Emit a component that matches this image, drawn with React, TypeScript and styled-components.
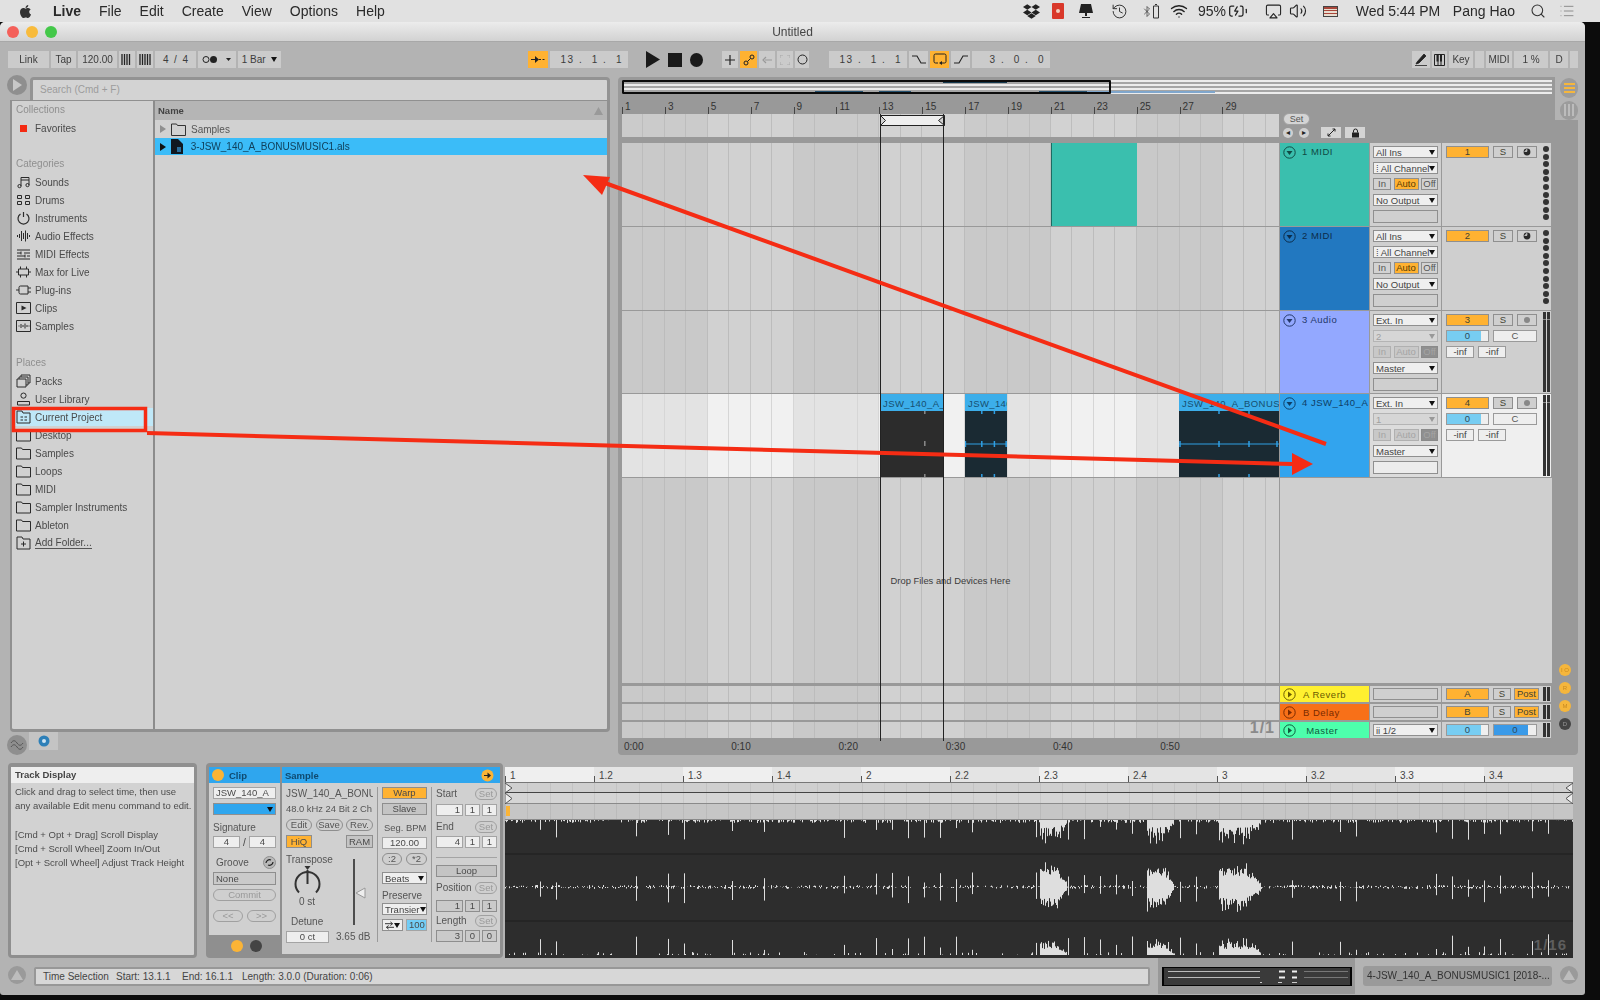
import styled, { createGlobalStyle } from "styled-components"
import { FaApple, FaDropbox } from "react-icons/fa"
import { Airplay, BatteryCharging, Bluetooth, History, List, Search, Volume2, Wifi } from "lucide-react"

const GlobalStyle = createGlobalStyle`
    html, body { margin: 0; padding: 0; background: #0c0c0c; }
    * { box-sizing: border-box; }
    body { font-family: "Liberation Sans", Arial, sans-serif; font-size: 10px; color: #3a3a3a; }
`

const BAR = 21.45

const Page = styled.div`
    position: relative;
    width: 1600px;
    height: 1000px;
    overflow: hidden;
    filter: blur(0.35px);
`

/* menu bar */
const MenuBar = styled.div`
    height: 22px;
    background: #e1e1e1;
    display: flex;
    align-items: center;
    padding-left: 18px;
    font-size: 14px;
    color: #2a2a2a;
`
const MenuItems = styled.div`
    display: flex;
    align-items: center;
    gap: 18px;
    margin-left: 20px;
`
const MenuItem = styled.span<{ $bold?: boolean }>`
    font-weight: ${p => (p.$bold ? 700 : 400)};
`
const Tray = styled.div`
    margin-left: auto;
    width: 580px;
    display: flex;
    align-items: center;
    justify-content: flex-start;
    padding-left: 2px;
`
const TraySlot = styled.div<{ $w: number; $ml?: number }>`
    width: ${p => p.$w}px;
    margin-left: ${p => p.$ml ?? 0}px;
    display: flex;
    align-items: center;
    justify-content: center;
    flex: none;
    white-space: nowrap;
`
const RedChip = styled.div`
    width: 12px;
    height: 16px;
    background: #d9382a;
    border-radius: 1px;
    display: flex;
    align-items: center;
    justify-content: center;
    &::after { content: ""; width: 4px; height: 4px; background: #f2d0c0; border-radius: 50%; }
`
const FlagChip = styled.div`
    width: 15px;
    height: 11px;
    background: repeating-linear-gradient(180deg, #a9463a 0 1.5px, #e8ddd0 1.5px 3px);
    border: 1px solid #444;
`

/* window */
const Window = styled.div`
    width: 1585px;
    height: 973px;
    background: #b3b3b3;
    border-radius: 5px 5px 3px 3px;
    display: flex;
    flex-direction: column;
`
const TitleBar = styled.div`
    height: 20px;
    flex: none;
    background: linear-gradient(180deg, #ececec, #d2d2d2);
    border-radius: 5px 5px 0 0;
    border-bottom: 1px solid #a8a8a8;
    display: grid;
    grid-template-columns: 1fr auto 1fr;
    align-items: center;
    font-size: 12px;
    color: #444;
`
const Lights = styled.div`
    display: flex;
    gap: 7px;
    padding-left: 7px;
`
const Light = styled.div<{ $c: string }>`
    width: 12px;
    height: 12px;
    border-radius: 50%;
    background: ${p => p.$c};
`

/* transport */
const ToolBar = styled.div`
    height: 35px;
    flex: none;
    display: flex;
    padding: 9px 7px 0 8px;
`
const ToolGroup = styled.div<{ $ml?: number; $gap?: number; $push?: boolean }>`
    display: flex;
    align-items: center;
    height: 17px;
    gap: ${p => p.$gap ?? 2}px;
    margin-left: ${p => (p.$push ? "auto" : `${p.$ml ?? 0}px`)};
`
const TBtn = styled.div<{ $w: number; $on?: boolean; $end?: boolean }>`
    width: ${p => p.$w}px;
    height: 17px;
    flex: none;
    background: ${p => (p.$on ? "#ffb232" : "#cbcbcb")};
    color: #3c3c3c;
    display: flex;
    align-items: center;
    justify-content: ${p => (p.$end ? "flex-end" : "center")};
    padding-right: ${p => (p.$end ? 5 : 0)}px;
    letter-spacing: ${p => (p.$end ? "1.5px" : "0")};
    white-space: pre;
    font-size: 10px;
`

/* main area */
const MainRow = styled.div`
    height: 678px;
    flex: none;
    display: flex;
    gap: 8px;
    padding-left: 10px;
`
const LeftCol = styled.div`
    width: 600px;
    display: flex;
    flex-direction: column;
`
const SearchRow = styled.div`
    height: 23px;
    flex: none;
    display: flex;
    justify-content: flex-end;
    position: relative;
`
const RoundBtn = styled.div<{ $top: number }>`
    position: absolute;
    left: -3px;
    top: ${p => p.$top}px;
    width: 20px;
    height: 20px;
    border-radius: 50%;
    background: #8f8f8f;
    display: flex;
    align-items: center;
    justify-content: center;
`
const SearchField = styled.div`
    width: 580px;
    background: #d3d3d3;
    border: 3px solid #939393;
    border-bottom: none;
    border-radius: 4px 4px 0 0;
    color: #9c9c9c;
    padding: 4px 7px;
    font-size: 10px;
`
const Browser = styled.div`
    height: 632px;
    flex: none;
    display: flex;
    background: #d1d1d1;
    border: 3px solid #909090;
    border-left-width: 2px;
    border-top-width: 1px;
    border-radius: 0 0 4px 4px;
`
const Sidebar = styled.div`
    width: 141px;
    flex: none;
`
const Divider = styled.div`
    width: 2px;
    flex: none;
    background: #8c8c8c;
`
const SideLabel = styled.div<{ $gap?: number }>`
    height: 18px;
    line-height: 18px;
    margin-top: ${p => p.$gap ?? 0}px;
    padding-left: 4px;
    color: #8f8f8f;
`
const SideRow = styled.div<{ $active?: boolean }>`
    height: 18px;
    display: flex;
    align-items: center;
    gap: 4px;
    padding-left: 4px;
    color: #4a4a4a;
    background: ${p => (p.$active ? "#bfe8f8" : "transparent")};
`
const SideLink = styled.span`
    border-bottom: 1px solid #555;
    line-height: 11px;
`
const Favorite = styled.div`
    width: 7px;
    height: 7px;
    margin: 0 4px;
    background: #f42a12;
`
const Pane = styled.div`
    flex: 1;
`
const NameHead = styled.div`
    height: 19px;
    background: #b5b5b5;
    display: flex;
    align-items: center;
    justify-content: space-between;
    padding: 0 4px 0 3px;
    font-weight: 700;
    font-size: 9.5px;
    color: #444;
`
const FileRow = styled.div<{ $sel?: boolean }>`
    height: ${p => (p.$sel ? 17 : 18)}px;
    background: ${p => (p.$sel ? "#3bbcf8" : "transparent")};
    color: ${p => (p.$sel ? "#10405c" : "#555")};
    display: flex;
    align-items: center;
    padding-left: 5px;
    gap: 5px;
`
const LeftFoot = styled.div`
    flex: 1;
    display: flex;
    position: relative;
`
const FootTab = styled.div`
    margin-left: 19px;
    width: 29px;
    height: 18px;
    background: #c4c4c4;
    display: flex;
    align-items: center;
    justify-content: center;
`

/* arrangement */
const Arrangement = styled.div`
    width: 960px;
    display: flex;
`
const ArrMain = styled.div`
    width: 937px;
    background: #999;
    border-radius: 4px 0 0 4px;
    padding: 3px 3px 0 4px;
    position: relative;
`
const ArrTabs = styled.div`
    width: 23px;
    display: flex;
    flex-direction: column;
`
const TabTop = styled.div`
    height: 43px;
    flex: none;
    display: flex;
    flex-direction: column;
    align-items: center;
    gap: 3px;
    padding: 1px 0 0 5px;
`
const TabPill = styled.div<{ $on?: boolean }>`
    width: 18px;
    height: 20px;
    border-radius: 9px;
    background: #9c9c9c;
    display: flex;
    flex-direction: ${p => (p.$on ? "column" : "row")};
    align-items: center;
    justify-content: center;
    gap: 2px;
`
const TabBar = styled.div<{ $on?: boolean }>`
    background: ${p => (p.$on ? "#f5b63c" : "#bcbcbc")};
    width: ${p => (p.$on ? "11px" : "2px")};
    height: ${p => (p.$on ? "2px" : "12px")};
`
const TabLow = styled.div`
    flex: 1;
    background: #999;
    border-radius: 0 0 4px 0;
    display: flex;
    flex-direction: column;
    justify-content: flex-end;
    gap: 6px;
    padding: 0 0 25px 4px;
`
const SideDot = styled.div<{ $dark?: boolean }>`
    width: 12px;
    height: 12px;
    border-radius: 50%;
    background: ${p => (p.$dark ? "#444" : "#f5b63c")};
    color: ${p => (p.$dark ? "#999" : "#c98a20")};
    font-size: 6px;
    display: flex;
    align-items: center;
    justify-content: center;
`
const OverviewStrip = styled.div`
    height: 14px;
    position: relative;
    background: repeating-linear-gradient(180deg, #ececec 0 2px, #a5a5a5 2px 4px);
`
const OverviewFrame = styled.div`
    position: absolute;
    left: 0;
    top: 0;
    width: 489px;
    height: 14px;
    border: 2px solid #0c0c0c;
    border-radius: 1px;
`
const OverviewMark = styled.div<{ $x: number; $w: number; $top?: boolean; $c: string }>`
    position: absolute;
    left: ${p => p.$x}px;
    width: ${p => p.$w}px;
    ${p => (p.$top ? "top: 1px;" : "bottom: 1px;")}
    height: 2px;
    background: ${p => p.$c};
`
const TopGrid = styled.div`
    margin-top: 7px;
    height: 36px;
    display: grid;
    grid-template-columns: 657px 1fr;
`
const Ruler = styled.div`
    height: 13px;
    display: flex;
`
const RulerCell = styled.div<{ $w: number }>`
    width: ${p => p.$w}px;
    flex: none;
    position: relative;
    padding-left: 3px;
    line-height: 12px;
    color: #333;
    font-size: 10px;
    &::before {
        content: "";
        position: absolute;
        left: 0;
        bottom: 0;
        height: 7px;
        width: 1px;
        background: #444;
    }
`
const laneBg = (dark: string, light: string, line: string) => `
    background-image:
        repeating-linear-gradient(90deg, transparent 0 ${BAR - 1}px, ${line} ${BAR - 1}px ${BAR}px),
        repeating-linear-gradient(90deg, ${dark} 0 ${BAR * 4}px, ${light} ${BAR * 4}px ${BAR * 8}px);
`
const LocatorLane = styled.div`
    height: 23px;
    ${laneBg("#cbcbcb", "#d2d2d2", "#bdbdbd")}
`
const SetBox = styled.div`
    padding: 12px 0 0 4px;
`
const SetPill = styled.div`
    width: 27px;
    height: 12px;
    border-radius: 6px;
    background: #d4d4d4;
    border: 1px solid #a0a0a0;
    text-align: center;
    line-height: 10px;
    font-size: 9px;
    color: #555;
`
const SetRow = styled.div`
    margin-top: 2px;
    display: flex;
    align-items: center;
    gap: 6px;
`
const NavDot = styled.div`
    width: 10px;
    height: 10px;
    border-radius: 50%;
    background: #d0d0d0;
    color: #222;
    font-size: 8px;
    line-height: 9px;
    text-align: center;
`
const SqBtn = styled.div<{ $ml?: number }>`
    width: 20px;
    height: 11px;
    background: #d4d4d4;
    margin-left: ${p => p.$ml ?? 0}px;
    display: flex;
    align-items: center;
    justify-content: center;
`
const Tracks = styled.div`
    margin-top: 6px;
    display: flex;
    flex-direction: column;
    gap: 1px;
`
const TrackRow = styled.div<{ $h: number }>`
    height: ${p => p.$h}px;
    display: grid;
    grid-template-columns: 657px 89px 71px 109px;
    column-gap: 1px;
`
const Lane = styled.div<{ $bright?: boolean }>`
    position: relative;
    ${p => (p.$bright ? laneBg("#e3e3e3", "#f1f1f1", "#d6d6d6") : laneBg("#c9c9c9", "#d1d1d1", "#bcbcbc"))}
`
const TealClip = styled.div`
    position: absolute;
    left: 429px;
    top: 0;
    bottom: 0;
    width: 86px;
    background: #3abfae;
    border-left: 1px solid #1d6b62;
`
const Clip = styled.div<{ $x: number; $w: number }>`
    position: absolute;
    left: ${p => p.$x}px;
    width: ${p => p.$w}px;
    top: 0;
    bottom: 0;
    display: flex;
    flex-direction: column;
    overflow: hidden;
`
const ClipHead = styled.div`
    height: 17px;
    flex: none;
    background: #3caeea;
    color: #174e70;
    padding: 4px 0 0 3px;
    font-size: 9.5px;
    letter-spacing: 0.4px;
    white-space: nowrap;
    overflow: hidden;
`
const ClipBody = styled.div<{ $c: string }>`
    flex: 1;
    background: ${p => p.$c};
    display: flex;
`
const Head = styled.div<{ $c: string; $ink: string; $compact?: boolean }>`
    background: ${p => p.$c};
    color: ${p => p.$ink};
    display: flex;
    align-items: ${p => (p.$compact ? "center" : "flex-start")};
    gap: ${p => (p.$compact ? 7 : 6)}px;
    padding: ${p => (p.$compact ? "0 0 0 3px" : "3px 0 0 3px")};
    font-size: 9.5px;
    letter-spacing: 0.5px;
    line-height: 11px;
    white-space: nowrap;
    overflow: hidden;
`
const InCol = styled.div`
    background: #cfcfcf;
    display: flex;
    flex-direction: column;
    gap: 4px;
    padding: 3px 3px 0;
`
const InColBright = styled(InCol)`
    background: #dcdcdc;
`
const Drop = styled.div<{ $off?: boolean; $w?: number }>`
    height: 12px;
    flex: none;
    ${p => (p.$w ? `width: ${p.$w}px;` : "")}
    background: ${p => (p.$off ? "#d6d6d6" : "#efefef")};
    border: 1px solid ${p => (p.$off ? "#b4b4b4" : "#8f8f8f")};
    color: ${p => (p.$off ? "#a0a0a0" : "#444")};
    display: flex;
    align-items: center;
    justify-content: space-between;
    padding: 0 2px;
    font-size: 9.5px;
    white-space: nowrap;
    overflow: hidden;
`
const Caret = styled.span<{ $off?: boolean }>`
    width: 0;
    height: 0;
    flex: none;
    border-left: 3.5px solid transparent;
    border-right: 3.5px solid transparent;
    border-top: 5px solid ${p => (p.$off ? "#999" : "#111")};
`
const Blank = styled.div<{ $light?: boolean }>`
    height: 13px;
    flex: none;
    background: ${p => (p.$light ? "#ececec" : "#cfcfcf")};
    border: 1px solid #8f8f8f;
`
const ModeRow = styled.div`
    display: grid;
    grid-template-columns: 18px 25px 17px;
    column-gap: 2.5px;
    height: 12px;
`
const Mode = styled.div<{ $kind?: "on" | "plain" | "off" | "dark" }>`
    border: 1px solid ${p => (p.$kind === "off" ? "#b0b0b0" : p.$kind === "dark" ? "#8a8a8a" : "#8f8f8f")};
    background: ${p =>
        p.$kind === "on" ? "#ffb232" : p.$kind === "dark" ? "#8f8f8f" : p.$kind === "off" ? "#c8c8c8" : "#d2d2d2"};
    color: ${p => (p.$kind === "on" ? "#5a3c00" : p.$kind === "off" || p.$kind === "dark" ? "#a4a4a4" : "#555")};
    font-size: 9.5px;
    text-align: center;
    line-height: 10px;
`
const MixCol = styled.div<{ $bright?: boolean }>`
    background: ${p => (p.$bright ? "#efefef" : "#cfcfcf")};
    display: flex;
    padding: 3px 0 0 4px;
    gap: 6px;
`
const MixCtrls = styled.div`
    width: 91px;
    flex: none;
    display: flex;
    flex-direction: column;
    gap: 4px;
`
const MixRow = styled.div`
    display: flex;
    gap: 4px;
    height: 12px;
`
const TrackNo = styled.div<{ $on?: boolean; $w: number; $ml?: number }>`
    width: ${p => p.$w}px;
    flex: none;
    margin-left: ${p => p.$ml ?? 0}px;
    background: ${p => (p.$on ? "#ffb232" : "#cfcfcf")};
    border: 1px solid #8f8f8f;
    text-align: center;
    line-height: 10px;
    font-size: 9.5px;
    color: #443;
`
const Slider = styled.div<{ $w: number; $fill: number; $dot?: boolean; $ml?: number }>`
    width: ${p => p.$w}px;
    flex: none;
    margin-left: ${p => p.$ml ?? 0}px;
    border: 1px solid #9a9a9a;
    background: linear-gradient(90deg, ${p => (p.$dot ? "#3a9ae8" : "#77cdf2")} ${p => p.$fill}%, #efefef ${p => p.$fill}%);
    text-align: center;
    line-height: 10px;
    font-size: 9.5px;
    color: #2d4a5a;
`
const Pan = styled.div`
    width: 44px;
    flex: none;
    border: 1px solid #9a9a9a;
    background: #eee;
    text-align: center;
    line-height: 10px;
    font-size: 9.5px;
    color: #555;
`
const Inf = styled.div`
    width: 28px;
    flex: none;
    border: 1px solid #9a9a9a;
    background: #eee;
    text-align: center;
    line-height: 10px;
    font-size: 9.5px;
    color: #444;
`
const Dots = styled.div`
    display: flex;
    flex-direction: column;
    gap: 1.6px;
`
const Dot = styled.div`
    width: 6px;
    height: 6px;
    border-radius: 50%;
    background: #333;
`
const Meter = styled.div`
    width: 7px;
    height: calc(100% + 1px);
    margin-top: -2px;
    display: flex;
    gap: 1px;
`
const MeterCol = styled.div`
    flex: 1;
    background: linear-gradient(180deg, #333 0 7px, #888 7px 8px, #333 8px);
`
const EmptyZone = styled.div`
    height: 205px;
    display: grid;
    grid-template-columns: 657px 1fr;
    column-gap: 1px;
    margin-bottom: 3px;
`
const DropLane = styled(Lane)`
    display: flex;
    align-items: center;
    justify-content: center;
    color: #3c3c3c;
    font-size: 9.4px;
`
const EmptyRight = styled.div`
    background: #cfcfcf;
`
const Returns = styled.div`
    display: flex;
    flex-direction: column;
    gap: 2px;
`
const BigPage = styled.div`
    position: absolute;
    right: 4px;
    top: -3px;
    font-size: 16px;
    font-weight: 700;
    color: #8a8a8a;
    letter-spacing: 1px;
`
const ReturnIn = styled.div`
    background: #cfcfcf;
    padding: 2px 3px;
`
const ReturnBlank = styled.div`
    height: 12px;
    background: #cfcfcf;
    border: 1px solid #8f8f8f;
`
const ReturnMix = styled.div`
    background: #cfcfcf;
    display: flex;
    padding: 2px 0 0 4px;
    gap: 6px;
`
const ReturnCtrls = styled.div`
    width: 91px;
    flex: none;
    height: 12px;
    display: flex;
    gap: 3px;
`
const ReturnMeter = styled.div`
    width: 7px;
    height: 14px;
    margin-top: -1px;
    display: flex;
    gap: 1px;
    & > div { flex: 1; background: #333; }
`
const Timeline = styled.div`
    margin-top: 1px;
    display: flex;
    height: 14px;
`
const TimeCell = styled.div`
    width: ${BAR * 5}px;
    flex: none;
    padding: 2px 0 0 2px;
    color: #333;
    font-size: 10px;
`
const Selection = styled.div`
    position: absolute;
    left: 261.8px;
    top: 37px;
    width: 64.4px;
    height: 627px;
    border-left: 1px solid #222;
    border-right: 1px solid #222;
`
const Brace = styled.svg`
    position: absolute;
    left: -1px;
    top: 1px;
`

/* lower area */
const LowerRow = styled.div`
    height: 195px;
    flex: none;
    margin-top: 8px;
    display: flex;
    padding-left: 8px;
`
const InfoPanel = styled.div`
    width: 189px;
    height: 195px;
    flex: none;
    border: 3px solid #8f8f8f;
    border-top-width: 4px;
    border-radius: 4px;
    background: #d2d2d2;
    margin-right: 9px;
`
const InfoHead = styled.div`
    height: 16px;
    background: #eee;
    font-weight: 700;
    line-height: 16px;
    padding-left: 4px;
    color: #444;
    font-size: 9.5px;
`
const InfoText = styled.div`
    padding: 2px 0 0 4px;
    line-height: 14.3px;
    color: #4c4c4c;
    font-size: 9.5px;
    white-space: pre;
`
const DetailBox = styled.div`
    width: 297px;
    flex: none;
    height: 195px;
    background: #8f8f8f;
    border-radius: 4px;
    display: flex;
    gap: 2px;
    padding: 4px 3px;
`
const ClipCol = styled.div`
    width: 71px;
    flex: none;
    display: flex;
    flex-direction: column;
`
const ClipPanel = styled.div`
    height: 168px;
    background: #d0d0d0;
    padding: 0 4px;
    display: flex;
    flex-direction: column;
`
const BlueHead = styled.div<{ $pad?: number }>`
    height: 16px;
    flex: none;
    background: #2fa6ee;
    color: #0f4a70;
    font-weight: 700;
    font-size: 9.5px;
    display: flex;
    align-items: center;
    justify-content: space-between;
    gap: 5px;
    padding: 0 6px 0 ${p => p.$pad ?? 3}px;
`
const ClipHeadWrap = styled(BlueHead)`
    justify-content: flex-start;
    margin: 0 -4px;
`
const OrangeDot = styled.div<{ $size: number }>`
    width: ${p => p.$size}px;
    height: ${p => p.$size}px;
    border-radius: 50%;
    background: #fbb436;
    flex: none;
`
const ClipFoot = styled.div`
    flex: 1;
    display: flex;
    justify-content: center;
    align-items: center;
    gap: 7px;
    padding: 2px 0 0 3px;
`
const DarkDot = styled.div`
    width: 12px;
    height: 12px;
    border-radius: 50%;
    background: #444;
`
const Space = styled.div<{ $h: number }>`
    height: ${p => p.$h}px;
    flex: none;
`
const Field = styled.div<{
    $w?: number
    $h?: number
    $tone?: "white" | "gray" | "grayLight" | "blue" | "orange"
    $align?: string
}>`
    width: ${p => (p.$w ? `${p.$w}px` : "100%")};
    height: ${p => p.$h ?? 12}px;
    flex: none;
    background: ${p =>
        p.$tone === "gray"
            ? "#c4c4c4"
            : p.$tone === "grayLight"
              ? "#cacaca"
              : p.$tone === "blue"
                ? "#72cdf6"
                : p.$tone === "orange"
                  ? "#ffb232"
                  : "#eee"};
    border: 1px solid ${p => (p.$tone === "gray" || p.$tone === "grayLight" || p.$tone === "orange" ? "#8e8e8e" : "#a4a4a4")};
    color: #4a4a4a;
    font-size: 9.5px;
    line-height: ${p => (p.$h ?? 12) - 2}px;
    padding: 0 2px;
    text-align: ${p => p.$align ?? "center"};
    white-space: nowrap;
    overflow: hidden;
`
const BlueDrop = styled.div`
    height: 12px;
    flex: none;
    background: #2fa6ee;
    border: 1px solid #8f8f8f;
    display: flex;
    align-items: center;
    justify-content: flex-end;
    padding-right: 2px;
`
const Text = styled.div<{ $pl?: number; $small?: boolean }>`
    height: 12px;
    flex: none;
    line-height: 12px;
    padding-left: ${p => p.$pl ?? 0}px;
    color: #555;
    font-size: ${p => (p.$small ? 9.4 : 10)}px;
    white-space: nowrap;
    overflow: hidden;
`
const Inline = styled.div<{ $gap?: number; $between?: boolean }>`
    display: flex;
    align-items: center;
    gap: ${p => p.$gap ?? 0}px;
    justify-content: ${p => (p.$between ? "space-between" : "flex-start")};
`
const Slash = styled.span`
    width: 9px;
    text-align: center;
    color: #444;
    flex: none;
`
const Pill = styled.div<{ $w?: number; $dim?: boolean }>`
    width: ${p => (p.$w ? `${p.$w}px` : "100%")};
    height: 12px;
    flex: none;
    border-radius: 6px;
    background: #cfcfcf;
    border: 1px solid ${p => (p.$dim ? "#a0a0a0" : "#8e8e8e")};
    color: ${p => (p.$dim ? "#999" : "#555")};
    font-size: 9.5px;
    line-height: 10px;
    text-align: center;
`
const SamplePanel = styled.div`
    width: 218px;
    flex: none;
    height: 187px;
    background: #d0d0d0;
    display: flex;
    flex-direction: column;
`
const SampleBody = styled.div`
    flex: 1;
    display: flex;
`
const ColOne = styled.div`
    width: 87px;
    margin-left: 4px;
    flex: none;
    display: flex;
    flex-direction: column;
`
const TuneRow = styled.div`
    display: flex;
    flex: 1;
`
const TuneLeft = styled.div`
    width: 50px;
    flex: none;
    display: flex;
    flex-direction: column;
`
const TuneRight = styled.div`
    flex: 1;
    display: flex;
    flex-direction: column;
`
const VSep = styled.div`
    width: 1px;
    height: 155px;
    margin: 4px 4px 0 4px;
    background: #9a9a9a;
    flex: none;
`
const ColTwo = styled.div`
    width: 45px;
    flex: none;
    display: flex;
    flex-direction: column;
`
const ColThree = styled.div`
    width: 61px;
    flex: none;
    display: flex;
    flex-direction: column;
`
const HRule = styled.div`
    height: 1px;
    background: #a4a4a4;
    flex: none;
`
const NumRow = styled.div`
    display: grid;
    grid-template-columns: 27px 15px 15px;
    column-gap: 2px;
    height: 12px;
`
const WaveCol = styled.div`
    width: 1068px;
    flex: none;
    margin-left: 2px;
    padding-top: 4px;
    display: flex;
    flex-direction: column;
    position: relative;
`
const WaveRuler = styled.div`
    height: 16px;
    flex: none;
    display: flex;
`
const WaveCell = styled.div<{ $alt: boolean }>`
    width: 89px;
    flex: none;
    position: relative;
    background: ${p => (p.$alt ? "#e4e4e4" : "#efefef")};
    padding: 3px 0 0 5px;
    color: #444;
    font-size: 10px;
    border-bottom: 1px solid #777;
    &::before {
        content: "";
        position: absolute;
        left: 0;
        bottom: 0;
        width: 1px;
        height: 6px;
        background: #555;
    }
`
const MarkRow = styled.div<{ $h: number; $bg: string; $line?: string }>`
    height: ${p => p.$h}px;
    flex: none;
    position: relative;
    background-color: ${p => p.$bg};
    background-image: repeating-linear-gradient(90deg, rgba(0, 0, 0, 0.06) 0 1px, transparent 1px 22.3px);
    border-bottom: 1px solid ${p => p.$line ?? "#8a8a8a"};
`
const MarkEnd = styled.svg<{ $right?: boolean }>`
    position: absolute;
    top: 0;
    ${p => (p.$right ? "right: 0;" : "left: 0;")}
`
const StartFlag = styled.div`
    position: absolute;
    left: 1px;
    top: 2px;
    width: 4px;
    height: 10px;
    background: #fbb436;
`
const WaveBox = styled.div`
    flex: 1;
    background: #2d2d2d;
    position: relative;
`
const WaveZoom = styled.div`
    position: absolute;
    right: 6px;
    bottom: 5px;
    color: #5e5e5e;
    font-weight: 700;
    font-size: 15px;
    letter-spacing: 1px;
`

/* status bar */
const StatusRow = styled.div`
    flex: 1;
    display: flex;
    align-items: stretch;
    padding-left: 8px;
`
const TriDot = styled.div`
    width: 18px;
    height: 18px;
    margin-top: 8px;
    border-radius: 50%;
    background: #9a9a9a;
    flex: none;
    display: flex;
    align-items: center;
    justify-content: center;
`
const StatusBox = styled.div`
    width: 1116px;
    height: 19px;
    margin: 9px 0 0 8px;
    flex: none;
    background: #d7d7d7;
    border: 2px solid #979797;
    border-radius: 2px;
    display: flex;
    align-items: center;
    padding-left: 7px;
    color: #444;
    font-size: 10px;
`
const StatusItem = styled.span<{ $w: number }>`
    width: ${p => p.$w}px;
    flex: none;
    white-space: nowrap;
`
const MiniWrap = styled.div`
    width: 197px;
    margin-left: 8px;
    flex: none;
    height: 36px;
    background: #989898;
    padding: 9px 0 0 4px;
`
const MiniWave = styled.div`
    width: 190px;
    height: 19px;
    background: #3a3a3a;
    border: 1px solid #050505;
    border-width: 1px 2px;
`
const ProjectTag = styled.div`
    width: 189px;
    height: 20px;
    margin: 8px 0 0 8px;
    flex: none;
    background: #9a9a9a;
    border-radius: 3px;
    font-size: 10px;
    line-height: 20px;
    padding-left: 4px;
    color: #333;
    white-space: nowrap;
    overflow: hidden;
`
const TriDotEnd = styled(TriDot)`
    margin-left: 8px;
`
const Annotations = styled.svg`
    position: absolute;
    left: 0;
    top: 0;
    pointer-events: none;
`

const ink = { fill: "none", stroke: "#2a2a2a", strokeWidth: 1 }

function SideIcon({ kind }: { kind: string }) {
    const svg = (children: React.ReactNode) => (
        <svg width="15" height="14" viewBox="0 0 15 14" style={{ flex: "none" }}>
            {children}
        </svg>
    )
    switch (kind) {
        case "sounds":
            return svg(<path {...ink} d="M5 11V2.5h8V10M5 5h8M3.5 9.500a1.600 1.600 0 1 0 .01 3.200 1.600 1.600 0 0 0-.01-3.200zM11.500 8.500a1.600 1.600 0 1 0 .01 3.200 1.600 1.600 0 0 0-.01-3.200z" />)
        case "drums":
            return svg(<path {...ink} d="M1.500 2.500h4v3h-4zM9.500 2.500h4v3h-4zM1.500 8.500h4v3h-4zM9.500 8.500h4v3h-4z" />)
        case "instruments":
            return svg(<path {...ink} strokeWidth={1.2} d="M4.500 3a5.500 5.500 0 1 0 6 0M7.500 1v5" />)
        case "audio":
            return svg(<path {...ink} d="M1.500 6v2M3.500 5v4M5.500 2v10M7.500 4v6M9.500 1.500v11M11.500 4v6M13.500 6v2" />)
        case "midi":
            return svg(<path {...ink} d="M1 3h13M1 6h4M8 6h6M1 9h8M11 9h3M1 12h13M5 4.500v3M9 7.500v3" />)
        case "max":
            return svg(<path {...ink} d="M2.500 4h10v6h-10zM4.500 4V1.500M10.500 4V1.500M4.500 10v2.500M10.500 10v2.500M0 7h2.500M12.500 7H15" />)
        case "plug":
            return svg(<path {...ink} d="M0 7h3M4.500 3h7.500v8H4.500a1.500 1.500 0 0 1-1.500-1.500v-5A1.500 1.500 0 0 1 4.500 3zM12 5h3M12 9h3" />)
        case "clips":
            return svg(
                <>
                    <path {...ink} d="M.5 1.500h14v11H.5z" />
                    <path d="M5.500 4.500l5 2.500-5 2.500z" fill="#2a2a2a" />
                </>,
            )
        case "samples":
            return svg(
                <>
                    <path {...ink} d="M.5 1.500h14v11H.5z" />
                    <path {...ink} d="M3 6.500v1M5 5v4M7 6v2M9 4.500v5M11 6v2M13 6.500v1" />
                </>,
            )
        case "packs":
            return svg(<path {...ink} d="M1 5h9v8H1zM3 5V3h9v8h-2M5 3V1h9v8h-2" />)
        case "user":
            return svg(<path {...ink} d="M7.500 1a2.600 2.600 0 1 0 .01 5.200A2.600 2.600 0 0 0 7.500 1zM1.500 9.500h12v3.500h-12z" />)
        case "project":
            return svg(<path {...ink} d="M1 3v10h13V3H7L6 1H1zM4.500 7H7M8.500 7h2.500M4.500 10h2.500M8.500 10h2.500" />)
        case "add":
            return svg(<path {...ink} d="M1 3v10h13V3H7L6 1H1zM7.500 5.500v5M5 8h5" />)
        default:
            return svg(<path {...ink} d="M.5 2v11h14V3.500H6.500L5.500 2z" />)
    }
}

const categories = [
    ["sounds", "Sounds"],
    ["drums", "Drums"],
    ["instruments", "Instruments"],
    ["audio", "Audio Effects"],
    ["midi", "MIDI Effects"],
    ["max", "Max for Live"],
    ["plug", "Plug-ins"],
    ["clips", "Clips"],
    ["samples", "Samples"],
]
const places = [
    ["packs", "Packs"],
    ["user", "User Library"],
    ["project", "Current Project"],
    ["folder", "Desktop"],
    ["folder", "Samples"],
    ["folder", "Loops"],
    ["folder", "MIDI"],
    ["folder", "Sampler Instruments"],
    ["folder", "Ableton"],
]

function rand(seed: number) {
    let s = seed
    return () => {
        s = (s * 1664525 + 1013904223) % 4294967296
        return s / 4294967296
    }
}

const bursts = [
    [535, 561],
    [642, 668],
    [714, 755],
]

function buildWave() {
    const r = rand(11)
    let d = ""
    for (let x = 0; x < 1068; x++) {
        const burst = bursts.find(([a, b]) => x >= a && x <= b)
        const beat = x % 16 === 3
        let top = r() < 0.4 ? r() * 3 : 0
        let midUp = r() < 0.35 ? r() * 2 : 0
        let midDown = r() < 0.35 ? r() * 2 : 0
        let low = r() < 0.12 ? r() * 3 : 0
        if (beat && r() < 0.6) {
            top = 6 + r() * 14
            midDown = 6 + r() * 11
            midUp = 4 + r() * 11
            low = 5 + r() * 16
        }
        if (burst) {
            const t = (x - burst[0]) / (burst[1] - burst[0])
            const env = t < 0.65 ? 1 : (1 - t) / 0.35
            const spiky = x % 3 === 0 ? 1 : 0.55
            top = (7 + r() * 18 * spiky) * (0.3 + 0.7 * env)
            midUp = (11 + r() * 14 * spiky) * (0.25 + 0.75 * env)
            midDown = (11 + r() * 14 * spiky) * (0.25 + 0.75 * env)
            low = (6 + r() * 14 * spiky) * (0.25 + 0.75 * env)
        }
        if (top > 0) d += `M${x + 0.5} 0V${top.toFixed(1)}`
        if (midUp + midDown > 0) d += `M${x + 0.5} ${(67 - midUp).toFixed(1)}V${(67 + midDown).toFixed(1)}`
        if (low > 0) d += `M${x + 0.5} 135V${(135 - low).toFixed(1)}`
    }
    return d
}
const wavePath = buildWave()

function Waveform() {
    return (
        <svg width="1068" height="135" viewBox="0 0 1068 135" style={{ display: "block" }}>
            <path d="M0 34H1068M0 101H1068" stroke="#1e1e1e" strokeWidth="1" />
            <path d={wavePath} stroke="#dedede" strokeWidth="1" fill="none" />
        </svg>
    )
}

function Fold({ color, open = true }: { color: string; open?: boolean }) {
    return (
        <svg width="13" height="13" viewBox="0 0 13 13" style={{ flex: "none" }}>
            <circle cx="6.500" cy="6.500" r="5.700" fill="none" stroke={color} strokeWidth="1" />
            {open ? <path d="M3.500 5h6l-3 4z" fill={color} /> : <path d="M5 3.500l4 3-4 3z" fill={color} />}
        </svg>
    )
}

function Ctl({ label, off }: { label: string; off?: boolean }) {
    return (
        <Drop $off={off}>
            <span>{label}</span>
            <Caret $off={off} />
        </Drop>
    )
}

function Arm({ round }: { round?: boolean }) {
    return (
        <svg width="18" height="10" viewBox="0 0 18 10">
            {round ? (
                <circle cx="9" cy="5" r="3" fill="#888" />
            ) : (
                <>
                    <circle cx="9" cy="5" r="3.400" fill="#2a2a2a" />
                    <path d="M9 1.600a3.400 3.400 0 0 1 0 3.400H6" fill="#bbb" />
                </>
            )}
        </svg>
    )
}

function MidiTrack({ n, color, ink: inkColor, clip }: { n: number; color: string; ink: string; clip?: boolean }) {
    return (
        <TrackRow $h={83}>
            <Lane>{clip && <TealClip />}</Lane>
            <Head $c={color} $ink={inkColor}>
                <Fold color={inkColor} />
                {n} MIDI
            </Head>
            <InCol>
                <Ctl label="All Ins" />
                <Ctl label="⁞ All Channel" />
                <ModeRow>
                    <Mode>In</Mode>
                    <Mode $kind="on">Auto</Mode>
                    <Mode>Off</Mode>
                </ModeRow>
                <Ctl label="No Output" />
                <Blank />
            </InCol>
            <MixCol>
                <MixCtrls>
                    <MixRow>
                        <TrackNo $w={43} $on>
                            {n}
                        </TrackNo>
                        <TrackNo $w={20}>S</TrackNo>
                        <TrackNo $w={20}>
                            <Arm />
                        </TrackNo>
                    </MixRow>
                </MixCtrls>
                <Dots>
                    {Array.from({ length: 10 }, (_, i) => (
                        <Dot key={i} />
                    ))}
                </Dots>
            </MixCol>
        </TrackRow>
    )
}

function AudioStrip({ n, bright }: { n: number; bright?: boolean }) {
    return (
        <MixCol $bright={bright}>
            <MixCtrls>
                <MixRow>
                    <TrackNo $w={43} $on>
                        {n}
                    </TrackNo>
                    <TrackNo $w={20}>S</TrackNo>
                    <TrackNo $w={20}>
                        <Arm round />
                    </TrackNo>
                </MixRow>
                <MixRow>
                    <Slider $w={43} $fill={83}>
                        0
                    </Slider>
                    <Pan>C</Pan>
                </MixRow>
                <MixRow>
                    <Inf>-inf</Inf>
                    <Inf>-inf</Inf>
                </MixRow>
            </MixCtrls>
            <Meter>
                <MeterCol />
                <MeterCol />
            </Meter>
        </MixCol>
    )
}

function AudioInputs({ ch, bright }: { ch: string; bright?: boolean }) {
    const Col = bright ? InColBright : InCol
    return (
        <Col>
            <Ctl label="Ext. In" />
            <Ctl label={ch} off />
            <ModeRow>
                <Mode $kind="off">In</Mode>
                <Mode $kind="off">Auto</Mode>
                <Mode $kind="dark">Off</Mode>
            </ModeRow>
            <Ctl label="Master" />
            <Blank $light={bright} />
        </Col>
    )
}

function ClipWave({ blue }: { blue?: boolean }) {
    const c = blue ? "#2f9fe4" : "#6a6a6a"
    return (
        <svg width="100%" height="66" viewBox="0 0 100 66" preserveAspectRatio="none" style={{ display: "block" }}>
            {blue && <path d="M0 33H100" stroke={c} strokeWidth="1" vectorEffect="non-scaling-stroke" />}
            <path
                d={blue ? "M1 30v6M40 30v6M70 30v6M98 30v6M40 0v3M70 0v3M40 63v3M70 63v3" : "M70 30v5M70 0v3M70 63v3"}
                stroke={blue ? c : "#8a8a8a"}
                strokeWidth="1.500"
                vectorEffect="non-scaling-stroke"
            />
        </svg>
    )
}

function ReturnRow({ name, letter, color, tint }: { name: string; letter: string; color: string; tint: string }) {
    return (
        <TrackRow $h={16}>
            <Lane />
            <Head $c={color} $ink={tint} $compact>
                <Fold color={tint} open={false} />
                {name}
            </Head>
            <ReturnIn>
                <ReturnBlank />
            </ReturnIn>
            <ReturnMix>
                <ReturnCtrls>
                    <TrackNo $w={43} $on>
                        {letter}
                    </TrackNo>
                    <TrackNo $w={18} $ml={1}>
                        S
                    </TrackNo>
                    <TrackNo $w={25} $on>
                        Post
                    </TrackNo>
                </ReturnCtrls>
                <ReturnMeter>
                    <div />
                    <div />
                </ReturnMeter>
            </ReturnMix>
        </TrackRow>
    )
}

const rulerLabels = Array.from({ length: 15 }, (_, i) => String(i * 2 + 1))
const timeLabels = ["0:00", "0:10", "0:20", "0:30", "0:40", "0:50"]
const waveLabels = ["1", "1.2", "1.3", "1.4", "2", "2.2", "2.3", "2.4", "3", "3.2", "3.3", "3.4"]

function App() {
    return (
        <Page>
            <GlobalStyle />
            <MenuBar>
                <FaApple size={15} color="#333" />
                <MenuItems>
                    <MenuItem $bold>Live</MenuItem>
                    <MenuItem>File</MenuItem>
                    <MenuItem>Edit</MenuItem>
                    <MenuItem>Create</MenuItem>
                    <MenuItem>View</MenuItem>
                    <MenuItem>Options</MenuItem>
                    <MenuItem>Help</MenuItem>
                </MenuItems>
                <Tray>
                    <TraySlot $w={18}>
                        <FaDropbox size={17} color="#222" />
                    </TraySlot>
                    <TraySlot $w={12} $ml={12}>
                        <RedChip />
                    </TraySlot>
                    <TraySlot $w={18} $ml={13}>
                        <svg width="18" height="16" viewBox="0 0 18 16">
                            <path d="M4 1h10l2 9H2zM8 10h2v3H8zM5 14h8v1H5z" fill="#222" />
                        </svg>
                    </TraySlot>
                    <TraySlot $w={18} $ml={15}>
                        <History size={17} color="#333" strokeWidth={1.4} />
                    </TraySlot>
                    <TraySlot $w={12} $ml={13}>
                        <Bluetooth size={15} color="#333" strokeWidth={1.4} />
                    </TraySlot>
                    <TraySlot $w={6} $ml={0}>
                        <svg width="6" height="15" viewBox="0 0 6 15">
                            <path d="M.5 2h5v12h-5zM2 .5h2" fill="none" stroke="#333" />
                        </svg>
                    </TraySlot>
                    <TraySlot $w={18} $ml={11}>
                        <Wifi size={18} color="#222" strokeWidth={1.8} />
                    </TraySlot>
                    <TraySlot $w={24} $ml={12}>
                        95%
                    </TraySlot>
                    <TraySlot $w={20} $ml={4}>
                        <BatteryCharging size={20} color="#222" strokeWidth={1.5} />
                    </TraySlot>
                    <TraySlot $w={18} $ml={16}>
                        <Airplay size={17} color="#222" strokeWidth={1.5} />
                    </TraySlot>
                    <TraySlot $w={20} $ml={6}>
                        <Volume2 size={18} color="#222" strokeWidth={1.5} />
                    </TraySlot>
                    <TraySlot $w={15} $ml={15}>
                        <FlagChip />
                    </TraySlot>
                    <TraySlot $w={84} $ml={18}>
                        Wed 5:44 PM
                    </TraySlot>
                    <TraySlot $w={60} $ml={14}>
                        Pang Hao
                    </TraySlot>
                    <TraySlot $w={16} $ml={16}>
                        <Search size={16} color="#333" strokeWidth={1.6} />
                    </TraySlot>
                    <TraySlot $w={16} $ml={13}>
                        <List size={16} color="#888" strokeWidth={1.4} />
                    </TraySlot>
                </Tray>
            </MenuBar>

            <Window>
                <TitleBar>
                    <Lights>
                        <Light $c="#f4605a" />
                        <Light $c="#f8bb3c" />
                        <Light $c="#44c84a" />
                    </Lights>
                    <span>Untitled</span>
                    <span />
                </TitleBar>

                <ToolBar>
                    <ToolGroup>
                        <TBtn $w={41}>Link</TBtn>
                        <TBtn $w={25}>Tap</TBtn>
                        <TBtn $w={39}>120.00</TBtn>
                        <TBtn $w={16}>
                            <svg width="12" height="11" viewBox="0 0 12 11">
                                <path d="M1 0v11M3.500 0v11M6 0v11M8.500 0v11" stroke="#222" strokeWidth="1.300" />
                            </svg>
                        </TBtn>
                        <TBtn $w={16}>
                            <svg width="12" height="11" viewBox="0 0 12 11">
                                <path d="M1 0v11M3.500 0v11M6 0v11M8.500 0v11M11 0v11" stroke="#222" strokeWidth="1.300" />
                            </svg>
                        </TBtn>
                        <TBtn $w={41}>4  /  4</TBtn>
                        <TBtn $w={38}>
                            <svg width="30" height="9" viewBox="0 0 30 9">
                                <circle cx="4" cy="4.500" r="3" fill="none" stroke="#222" />
                                <circle cx="11.500" cy="4.500" r="3.500" fill="#222" />
                                <path d="M24 3h5l-2.500 3z" fill="#222" />
                            </svg>
                        </TBtn>
                        <TBtn $w={43}>
                            1 Bar&nbsp;&nbsp;
                            <Caret />
                        </TBtn>
                    </ToolGroup>
                    <ToolGroup $ml={247}>
                        <TBtn $w={20} $on>
                            <svg width="14" height="9" viewBox="0 0 14 9">
                                <path d="M0 4.500h4M8 4.500h2M11.500 4.500h2" stroke="#222" />
                                <path d="M4 1l4 3.500-4 3.500z" fill="#222" />
                            </svg>
                        </TBtn>
                        <TBtn $w={78} $end>
                            13 .  1 .  1
                        </TBtn>
                    </ToolGroup>
                    <ToolGroup $ml={18} $gap={8}>
                        <svg width="14" height="17" viewBox="0 0 14 17">
                            <path d="M0 0l14 8.500L0 17z" fill="#1a1a1a" />
                        </svg>
                        <svg width="14" height="14" viewBox="0 0 14 14">
                            <rect width="14" height="14" fill="#1a1a1a" />
                        </svg>
                        <svg width="13" height="14" viewBox="0 0 13 14">
                            <ellipse cx="6.500" cy="7" rx="6.500" ry="7" fill="#1a1a1a" />
                        </svg>
                    </ToolGroup>
                    <ToolGroup $ml={19} $gap={2}>
                        <TBtn $w={16}>
                            <svg width="10" height="10" viewBox="0 0 10 10">
                                <path d="M5 0v10M0 5h10" stroke="#222" strokeWidth="1.200" />
                            </svg>
                        </TBtn>
                        <TBtn $w={17} $on>
                            <svg width="12" height="12" viewBox="0 0 12 12">
                                <circle cx="3" cy="9" r="2" fill="none" stroke="#222" />
                                <circle cx="9" cy="3" r="2" fill="none" stroke="#222" />
                                <path d="M4.500 7.500l3-3" stroke="#222" />
                            </svg>
                        </TBtn>
                        <TBtn $w={16}>
                            <svg width="10" height="8" viewBox="0 0 10 8">
                                <path d="M10 4H3M4 1L1 4l3 3" fill="none" stroke="#999" strokeWidth="1.200" />
                            </svg>
                        </TBtn>
                        <TBtn $w={16}>
                            <svg width="10" height="10" viewBox="0 0 10 10">
                                <path d="M0 3V0h3M7 0h3v3M10 7v3H7M3 10H0V7" fill="none" stroke="#aaa" />
                            </svg>
                        </TBtn>
                        <TBtn $w={14}>
                            <svg width="11" height="11" viewBox="0 0 11 11">
                                <circle cx="5.500" cy="5.500" r="4.500" fill="none" stroke="#222" />
                            </svg>
                        </TBtn>
                    </ToolGroup>
                    <ToolGroup $ml={20}>
                        <TBtn $w={78} $end>
                            13 .  1 .  1
                        </TBtn>
                        <TBtn $w={19}>
                            <svg width="14" height="9" viewBox="0 0 14 9">
                                <path d="M0 1h5l4 7h5" fill="none" stroke="#222" strokeWidth="1.100" />
                            </svg>
                        </TBtn>
                        <TBtn $w={19} $on>
                            <svg width="14" height="13" viewBox="0 0 14 13">
                                <path d="M5 10H2.500A1.500 1.500 0 0 1 1 8.500v-6A1.500 1.500 0 0 1 2.500 1h9A1.500 1.500 0 0 1 13 2.500v6a1.500 1.500 0 0 1-1.500 1.500H9" fill="none" stroke="#222" />
                                <path d="M9 8l-3 2 3 2z" fill="#222" />
                            </svg>
                        </TBtn>
                        <TBtn $w={19}>
                            <svg width="14" height="9" viewBox="0 0 14 9">
                                <path d="M0 8h5l4-7h5" fill="none" stroke="#222" strokeWidth="1.100" />
                            </svg>
                        </TBtn>
                        <TBtn $w={78} $end>
                            3 .  0 .  0
                        </TBtn>
                    </ToolGroup>
                    <ToolGroup $push>
                        <TBtn $w={18}>
                            <svg width="12" height="13" viewBox="0 0 12 13">
                                <path d="M2 9l7-8 2 2-7 7-3 1zM0 12.500h12" fill="#222" stroke="#222" strokeWidth=".8" />
                            </svg>
                        </TBtn>
                        <TBtn $w={15}>
                            <svg width="11" height="12" viewBox="0 0 11 12">
                                <path d="M.5.5h10v11H.5zM4 .5v11M7 .5v11" fill="none" stroke="#222" />
                                <path d="M2.500 .5h2v7h-2zM6 .5h2v7H6z" fill="#222" />
                            </svg>
                        </TBtn>
                        <TBtn $w={24}>Key</TBtn>
                        <TBtn $w={9} />
                        <TBtn $w={26}>MIDI</TBtn>
                        <TBtn $w={34}>1 %</TBtn>
                        <TBtn $w={18}>D</TBtn>
                        <TBtn $w={8} />
                    </ToolGroup>
                </ToolBar>

                <MainRow>
                    <LeftCol>
                        <SearchRow>
                            <RoundBtn $top={-2}>
                                <svg width="10" height="12" viewBox="0 0 10 12">
                                    <path d="M1 0l9 6-9 6z" fill="#c8c8c8" />
                                </svg>
                            </RoundBtn>
                            <SearchField>Search (Cmd + F)</SearchField>
                        </SearchRow>
                        <Browser>
                            <Sidebar>
                                <SideLabel>Collections</SideLabel>
                                <SideRow>
                                    <Favorite />
                                    Favorites
                                </SideRow>
                                <SideLabel $gap={18}>Categories</SideLabel>
                                {categories.map(([kind, label]) => (
                                    <SideRow key={label}>
                                        <SideIcon kind={kind} />
                                        {label}
                                    </SideRow>
                                ))}
                                <SideLabel $gap={19}>Places</SideLabel>
                                {places.map(([kind, label]) => (
                                    <SideRow key={label} $active={label === "Current Project"}>
                                        <SideIcon kind={kind} />
                                        {label}
                                    </SideRow>
                                ))}
                                <SideRow>
                                    <SideIcon kind="add" />
                                    <SideLink>Add Folder...</SideLink>
                                </SideRow>
                            </Sidebar>
                            <Divider />
                            <Pane>
                                <NameHead>
                                    Name
                                    <svg width="9" height="8" viewBox="0 0 9 8">
                                        <path d="M4.500 0L9 8H0z" fill="#999" />
                                    </svg>
                                </NameHead>
                                <FileRow>
                                    <svg width="6" height="8" viewBox="0 0 6 8">
                                        <path d="M0 0l6 4-6 4z" fill="#8f8f8f" />
                                    </svg>
                                    <svg width="15" height="13" viewBox="0 0 15 13">
                                        <path d="M.5 1v11.500h14V2.500H6.500L5.500 1z" fill="none" stroke="#333" />
                                    </svg>
                                    Samples
                                </FileRow>
                                <FileRow $sel>
                                    <svg width="6" height="8" viewBox="0 0 6 8">
                                        <path d="M0 0l6 4-6 4z" fill="#111" />
                                    </svg>
                                    <svg width="12" height="15" viewBox="0 0 12 15">
                                        <path d="M0 0h7l5 5v10H0z" fill="#101820" />
                                        <path d="M6 8h4v5H6z" fill="#2a6d9a" />
                                    </svg>
                                    &nbsp;3-JSW_140_A_BONUSMUSIC1.als
                                </FileRow>
                            </Pane>
                        </Browser>
                        <LeftFoot>
                            <RoundBtn $top={3}>
                                <svg width="14" height="10" viewBox="0 0 14 10">
                                    <path d="M1 3c2-3 4-3 6 0s4 3 6 0M1 7c2-3 4-3 6 0s4 3 6 0" fill="none" stroke="#555" />
                                </svg>
                            </RoundBtn>
                            <FootTab>
                                <svg width="12" height="12" viewBox="0 0 12 12">
                                    <circle cx="6" cy="6" r="5.500" fill="#2c7fb8" />
                                    <circle cx="6" cy="6" r="2" fill="#cfe4f2" />
                                </svg>
                            </FootTab>
                        </LeftFoot>
                    </LeftCol>

                    <Arrangement>
                        <ArrMain>
                            <OverviewStrip>
                                <OverviewMark $x={193} $w={48} $c="#24506e" />
                                <OverviewMark $x={257} $w={32} $c="#24506e" />
                                <OverviewMark $x={321} $w={64} $top $c="#14384e" />
                                <OverviewMark $x={417} $w={48} $c="#24506e" />
                                <OverviewMark $x={465} $w={128} $c="#7fa6cc" />
                                <OverviewFrame />
                            </OverviewStrip>
                            <TopGrid>
                                <div>
                                    <Ruler>
                                        {rulerLabels.map(l => (
                                            <RulerCell key={l} $w={BAR * 2}>
                                                {l === "31" ? "" : l}
                                            </RulerCell>
                                        ))}
                                    </Ruler>
                                    <LocatorLane />
                                </div>
                                <SetBox>
                                    <SetPill>Set</SetPill>
                                    <SetRow>
                                        <NavDot>◂</NavDot>
                                        <NavDot>▸</NavDot>
                                        <SqBtn $ml={6}>
                                            <svg width="9" height="9" viewBox="0 0 9 9">
                                                <path d="M1 8l7-7M1 8h2.500M1 8V5.500M8 1H5.500M8 1v2.500" stroke="#222" fill="none" />
                                            </svg>
                                        </SqBtn>
                                        <SqBtn $ml={-2}>
                                            <svg width="9" height="10" viewBox="0 0 9 10">
                                                <path d="M2.500 4.500V3a2 2 0 0 1 4 0v1.500" fill="none" stroke="#222" />
                                                <rect x="1" y="4.500" width="7" height="5" fill="#222" />
                                            </svg>
                                        </SqBtn>
                                    </SetRow>
                                </SetBox>
                            </TopGrid>

                            <Tracks>
                                <MidiTrack n={1} color="#3abfae" ink="#104a44" clip />
                                <MidiTrack n={2} color="#2278c0" ink="#0c2c4a" />
                                <TrackRow $h={82}>
                                    <Lane />
                                    <Head $c="#93a8ff" $ink="#24386a">
                                        <Fold color="#24386a" />3 Audio
                                    </Head>
                                    <AudioInputs ch="2" />
                                    <AudioStrip n={3} />
                                </TrackRow>
                                <TrackRow $h={83}>
                                    <Lane $bright>
                                        <Clip $x={258} $w={64}>
                                            <ClipHead>JSW_140_A_B</ClipHead>
                                            <ClipBody $c="#2c2c2c">
                                                <ClipWave />
                                            </ClipBody>
                                        </Clip>
                                        <Clip $x={343} $w={42}>
                                            <ClipHead>JSW_140</ClipHead>
                                            <ClipBody $c="#1a2a33">
                                                <ClipWave blue />
                                            </ClipBody>
                                        </Clip>
                                        <Clip $x={557} $w={100}>
                                            <ClipHead>JSW_140_A_BONUSM</ClipHead>
                                            <ClipBody $c="#1a2a33">
                                                <ClipWave blue />
                                            </ClipBody>
                                        </Clip>
                                    </Lane>
                                    <Head $c="#32a4ee" $ink="#0f3e66">
                                        <Fold color="#0f3e66" />4 JSW_140_A
                                    </Head>
                                    <AudioInputs ch="1" bright />
                                    <AudioStrip n={4} bright />
                                </TrackRow>
                                <EmptyZone>
                                    <DropLane>Drop Files and Devices Here</DropLane>
                                    <EmptyRight />
                                </EmptyZone>
                            </Tracks>

                            <Returns>
                                <ReturnRow name="A Reverb" letter="A" color="#fff030" tint="#6a5a00" />
                                <ReturnRow name="B Delay" letter="B" color="#f87018" tint="#7a2a00" />
                                <TrackRow $h={16}>
                                    <Lane>
                                        <BigPage>1/1</BigPage>
                                    </Lane>
                                    <Head $c="#4dffac" $ink="#0f5a3c" $compact>
                                        <Fold color="#0f5a3c" open={false} />
                                        &nbsp;Master
                                    </Head>
                                    <ReturnIn>
                                        <Ctl label="ii 1/2" />
                                    </ReturnIn>
                                    <ReturnMix>
                                        <ReturnCtrls>
                                            <Slider $w={43} $fill={83}>
                                                0
                                            </Slider>
                                            <Slider $w={44} $fill={80} $dot $ml={1}>
                                                0
                                            </Slider>
                                        </ReturnCtrls>
                                        <ReturnMeter>
                                            <div />
                                            <div />
                                        </ReturnMeter>
                                    </ReturnMix>
                                </TrackRow>
                            </Returns>

                            <Timeline>
                                {timeLabels.map(t => (
                                    <TimeCell key={t}>{t}</TimeCell>
                                ))}
                            </Timeline>

                            <Selection>
                                <Brace width="65" height="11" viewBox="0 0 65 11">
                                    <path d="M.5.5h64v10H.5l5-5zM64.500 .5l-6 5 6 5" fill="#eee" stroke="#222" />
                                </Brace>
                            </Selection>
                        </ArrMain>
                        <ArrTabs>
                            <TabTop>
                                <TabPill $on>
                                    <TabBar $on />
                                    <TabBar $on />
                                    <TabBar $on />
                                </TabPill>
                                <TabPill>
                                    <TabBar />
                                    <TabBar />
                                    <TabBar />
                                </TabPill>
                            </TabTop>
                            <TabLow>
                                <SideDot>I O</SideDot>
                                <SideDot>R</SideDot>
                                <SideDot>M</SideDot>
                                <SideDot $dark>D</SideDot>
                            </TabLow>
                        </ArrTabs>
                    </Arrangement>
                </MainRow>

                <LowerRow>
                    <InfoPanel>
                        <InfoHead>Track Display</InfoHead>
                        <InfoText>
                            {`Click and drag to select time, then use
any available Edit menu command to edit.

[Cmd + Opt + Drag] Scroll Display
[Cmd + Scroll Wheel] Zoom In/Out
[Opt + Scroll Wheel] Adjust Track Height`}
                        </InfoText>
                    </InfoPanel>

                    <DetailBox>
                        <ClipCol>
                            <ClipPanel>
                                <ClipHeadWrap>
                                    <OrangeDot $size={12} />
                                    Clip
                                </ClipHeadWrap>
                                <Space $h={4} />
                                <Field $align="left">JSW_140_A</Field>
                                <Space $h={4} />
                                <BlueDrop>
                                    <Caret />
                                </BlueDrop>
                                <Space $h={7} />
                                <Text>Signature</Text>
                                <Space $h={2} />
                                <Inline>
                                    <Field $w={27}>4</Field>
                                    <Slash>/</Slash>
                                    <Field $w={27}>4</Field>
                                </Inline>
                                <Space $h={8} />
                                <Inline $between>
                                    <Text $pl={3}>Groove</Text>
                                    <svg width="13" height="13" viewBox="0 0 13 13">
                                        <circle cx="6.500" cy="6.500" r="6" fill="#b8b8b8" stroke="#8e8e8e" />
                                        <path d="M3 7a3.500 3.500 0 0 1 5-3M10 6a3.500 3.500 0 0 1-5 3" fill="none" stroke="#222" strokeWidth="1.200" />
                                    </svg>
                                </Inline>
                                <Space $h={3} />
                                <Field $tone="grayLight" $h={13} $align="left">
                                    None
                                </Field>
                                <Space $h={4} />
                                <Pill $dim>Commit</Pill>
                                <Space $h={9} />
                                <Inline $between>
                                    <Pill $w={30} $dim>
                                        {"<<"}
                                    </Pill>
                                    <Pill $w={29} $dim>
                                        {">>"}
                                    </Pill>
                                </Inline>
                            </ClipPanel>
                            <ClipFoot>
                                <OrangeDot $size={12} />
                                <DarkDot />
                            </ClipFoot>
                        </ClipCol>

                        <SamplePanel>
                            <BlueHead>
                                Sample
                                <svg width="13" height="13" viewBox="0 0 13 13">
                                    <circle cx="6.500" cy="6.500" r="6" fill="#fbb436" />
                                    <path d="M3 6.500h4" stroke="#222" />
                                    <path d="M6.500 3.500l3.500 3-3.500 3z" fill="#222" />
                                </svg>
                            </BlueHead>
                            <SampleBody>
                                <ColOne>
                                    <Space $h={5} />
                                    <Text>JSW_140_A_BONUS</Text>
                                    <Space $h={3} />
                                    <Text $small>48.0 kHz 24 Bit 2 Ch</Text>
                                    <Space $h={4} />
                                    <Inline $between>
                                        <Pill $w={26}>Edit</Pill>
                                        <Pill $w={27}>Save</Pill>
                                        <Pill $w={27}>Rev.</Pill>
                                    </Inline>
                                    <Space $h={4} />
                                    <Inline $between>
                                        <Field $w={26} $h={13} $tone="orange">
                                            HiQ
                                        </Field>
                                        <Field $w={27} $h={13} $tone="gray">
                                            RAM
                                        </Field>
                                    </Inline>
                                    <TuneRow>
                                        <TuneLeft>
                                            <Space $h={6} />
                                            <Text>Transpose</Text>
                                            <svg width="44" height="30" viewBox="0 0 44 30" style={{ flex: "none" }}>
                                                <path d="M18.500 0h6l-3 4z" fill="#333" />
                                                <path d="M13 26.500a12 12 0 1 1 17 0" fill="none" stroke="#333" strokeWidth="2" />
                                                <path d="M21.500 4v14" stroke="#333" strokeWidth="2" />
                                            </svg>
                                            <Text $pl={13}>0 st</Text>
                                            <Space $h={8} />
                                            <Text $pl={5}>Detune</Text>
                                            <Space $h={3} />
                                            <Field $w={43} $align="center">
                                                0 ct
                                            </Field>
                                        </TuneLeft>
                                        <TuneRight>
                                            <Space $h={11} />
                                            <svg width="37" height="66" viewBox="0 0 37 66" style={{ flex: "none" }}>
                                                <path d="M18 0v66" stroke="#222" strokeWidth="1.500" />
                                                <path d="M20 34l9-5v10z" fill="#eee" stroke="#999" />
                                            </svg>
                                            <Space $h={6} />
                                            <Text>3.65 dB</Text>
                                        </TuneRight>
                                    </TuneRow>
                                </ColOne>
                                <VSep />
                                <ColTwo>
                                    <Space $h={4} />
                                    <Field $tone="orange">Warp</Field>
                                    <Space $h={4} />
                                    <Field $tone="gray">Slave</Field>
                                    <Space $h={7} />
                                    <Text $pl={2} $small>
                                        Seg. BPM
                                    </Text>
                                    <Space $h={3} />
                                    <Field>120.00</Field>
                                    <Space $h={4} />
                                    <Inline $between>
                                        <Pill $w={20}>:2</Pill>
                                        <Pill $w={21}>*2</Pill>
                                    </Inline>
                                    <Space $h={7} />
                                    <Ctl label="Beats" />
                                    <Space $h={6} />
                                    <Text>Preserve</Text>
                                    <Space $h={1} />
                                    <Drop>
                                        <span>Transier</span>
                                        <Caret />
                                    </Drop>
                                    <Space $h={4} />
                                    <Inline $between>
                                        <Drop $w={21}>
                                            <svg width="10" height="9" viewBox="0 0 10 9">
                                                <path d="M0 2.500h8M6 .5l2.500 2-2.500 2M10 6.500H2M4 4.500l-2.500 2 2.500 2" fill="none" stroke="#222" />
                                            </svg>
                                            <Caret />
                                        </Drop>
                                        <Field $w={21} $tone="blue">
                                            100
                                        </Field>
                                    </Inline>
                                </ColTwo>
                                <VSep />
                                <ColThree>
                                    <Space $h={5} />
                                    <Inline $between>
                                        <Text>Start</Text>
                                        <Pill $w={22} $dim>
                                            Set
                                        </Pill>
                                    </Inline>
                                    <Space $h={4} />
                                    <NumRow>
                                        <Field $align="right">1</Field>
                                        <Field>1</Field>
                                        <Field>1</Field>
                                    </NumRow>
                                    <Space $h={5} />
                                    <Inline $between>
                                        <Text>End</Text>
                                        <Pill $w={22} $dim>
                                            Set
                                        </Pill>
                                    </Inline>
                                    <Space $h={3} />
                                    <NumRow>
                                        <Field $align="right">4</Field>
                                        <Field>1</Field>
                                        <Field>1</Field>
                                    </NumRow>
                                    <Space $h={9} />
                                    <HRule />
                                    <Space $h={7} />
                                    <Field $tone="gray">Loop</Field>
                                    <Space $h={5} />
                                    <Inline $between>
                                        <Text>Position</Text>
                                        <Pill $w={22} $dim>
                                            Set
                                        </Pill>
                                    </Inline>
                                    <Space $h={6} />
                                    <NumRow>
                                        <Field $tone="grayLight" $align="right">
                                            1
                                        </Field>
                                        <Field $tone="grayLight">1</Field>
                                        <Field $tone="grayLight">1</Field>
                                    </NumRow>
                                    <Space $h={3} />
                                    <Inline $between>
                                        <Text>Length</Text>
                                        <Pill $w={22} $dim>
                                            Set
                                        </Pill>
                                    </Inline>
                                    <Space $h={3} />
                                    <NumRow>
                                        <Field $tone="grayLight" $align="right">
                                            3
                                        </Field>
                                        <Field $tone="grayLight">0</Field>
                                        <Field $tone="grayLight">0</Field>
                                    </NumRow>
                                </ColThree>
                            </SampleBody>
                        </SamplePanel>
                    </DetailBox>

                    <WaveCol>
                        <WaveRuler>
                            {waveLabels.map((l, i) => (
                                <WaveCell key={l} $alt={i % 2 === 1}>
                                    {l}
                                </WaveCell>
                            ))}
                        </WaveRuler>
                        <MarkRow $h={10} $bg="#cfcfcf" $line="#444">
                            <MarkEnd width="8" height="10" viewBox="0 0 8 10">
                                <path d="M0 0l7 5-7 5z" fill="#eee" stroke="#555" />
                            </MarkEnd>
                            <MarkEnd $right width="8" height="10" viewBox="0 0 8 10">
                                <path d="M8 0L1 5l7 5z" fill="#eee" stroke="#555" />
                            </MarkEnd>
                        </MarkRow>
                        <MarkRow $h={11} $bg="#d5d5d5">
                            <MarkEnd width="8" height="11" viewBox="0 0 8 11">
                                <path d="M0 0l7 5.500L0 11z" fill="#eee" stroke="#555" />
                            </MarkEnd>
                            <MarkEnd $right width="8" height="11" viewBox="0 0 8 11">
                                <path d="M8 0L1 5.500 8 11z" fill="#eee" stroke="#555" />
                            </MarkEnd>
                        </MarkRow>
                        <MarkRow $h={16} $bg="#c6c6c6">
                            <StartFlag />
                        </MarkRow>
                        <WaveBox>
                            <Waveform />
                            <WaveZoom>1/16</WaveZoom>
                        </WaveBox>
                    </WaveCol>
                </LowerRow>

                <StatusRow>
                    <TriDot>
                        <svg width="12" height="10" viewBox="0 0 12 10">
                            <path d="M6 0l6 10H0z" fill="#bdbdbd" />
                        </svg>
                    </TriDot>
                    <StatusBox>
                        <StatusItem $w={73}>Time Selection</StatusItem>
                        <StatusItem $w={66}>Start: 13.1.1</StatusItem>
                        <StatusItem $w={60}>End: 16.1.1</StatusItem>
                        <StatusItem $w={200}>Length: 3.0.0 (Duration: 0:06)</StatusItem>
                    </StatusBox>
                    <MiniWrap>
                        <MiniWave>
                            <svg width="186" height="17" viewBox="0 0 186 17" style={{ display: "block" }}>
                                <path d="M4 3.500H96M4 9.500H96" stroke="#bbb" strokeWidth="1" />
                                <path d="M96 14.500h2M114 14.500h4M128 14.500h5" stroke="#ccc" strokeWidth="1" />
                                <path d="M115 3.500h6M128 3.500h5M115 9.500h6M128 9.500h5" stroke="#f0f0f0" strokeWidth="2" />
                                <path d="M140 3.500h44M140 9.500h44" stroke="#777" strokeWidth="1" />
                            </svg>
                        </MiniWave>
                    </MiniWrap>
                    <ProjectTag>4-JSW_140_A_BONUSMUSIC1 [2018-...</ProjectTag>
                    <TriDotEnd>
                        <svg width="12" height="10" viewBox="0 0 12 10">
                            <path d="M6 0l6 10H0z" fill="#bdbdbd" />
                        </svg>
                    </TriDotEnd>
                </StatusRow>
            </Window>

            <Annotations width="1600" height="1000" viewBox="0 0 1600 1000">
                <rect x="13.500" y="408.500" width="132" height="22" fill="none" stroke="#f52c14" strokeWidth="3.500" />
                <path d="M147 433L1292 464" stroke="#f52c14" strokeWidth="4" />
                <path d="M1313 464L1292 453V475z" fill="#f52c14" />
                <path d="M1326 444L605 183" stroke="#f52c14" strokeWidth="4" />
                <path d="M583 175L610 177L602 195z" fill="#f52c14" />
            </Annotations>
        </Page>
    )
}

export default App
